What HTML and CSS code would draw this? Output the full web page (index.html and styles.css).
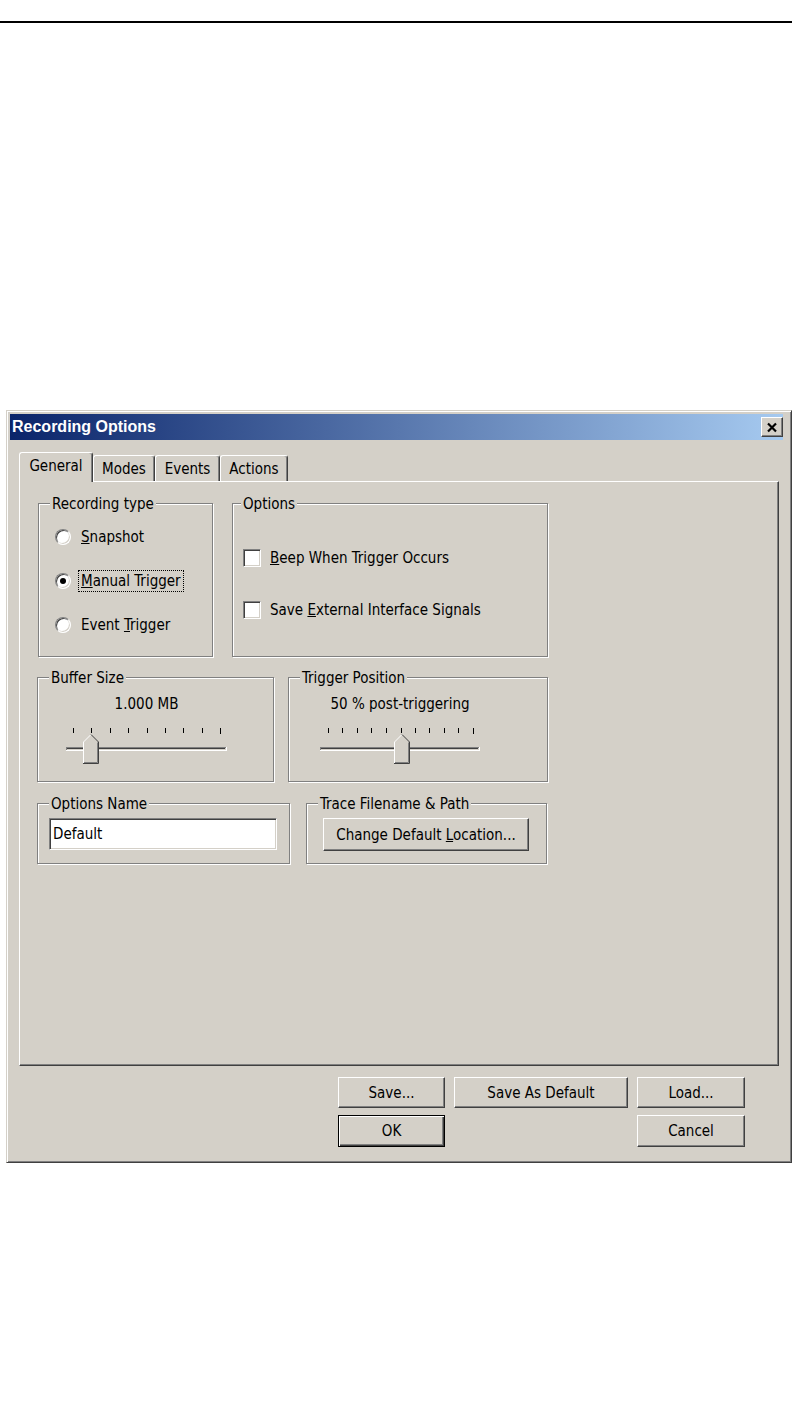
FILE: index.html
```html
<!DOCTYPE html>
<html lang="en">

<head>
    <meta charset="UTF-8">
    <title>Recording Options</title>
    <link rel="stylesheet" href="styles.css">
</head>

<body>
    <div class="rule"></div>

    <div class="dialog">
        <div class="titlebar">
            <span class="title">Recording Options</span>
            <span class="close">
                <svg width="12" height="11" viewBox="0 0 12 11">
                    <path d="M2 1.5 L10 9.5 M10 1.5 L2 9.5" stroke="#000" stroke-width="2.2" fill="none"/>
                </svg>
            </span>
        </div>

        <div class="tabs">
            <div class="tab active">General</div>
            <div class="tab tab-modes">Modes</div>
            <div class="tab tab-events">Events</div>
            <div class="tab tab-actions">Actions</div>
        </div>

        <div class="panel">
            <div class="row">
                <div class="group g-rectype">
                    <div class="legend">Recording type</div>
                    <div class="choices">
                        <div class="choice"><span class="radio"></span><span class="lbl"><u>S</u>napshot</span></div>
                        <div class="choice"><span class="radio checked"></span><span class="lbl focus"><u>M</u>anual Trigger</span></div>
                        <div class="choice"><span class="radio"></span><span class="lbl">Event <u>T</u>rigger</span></div>
                    </div>
                </div>
                <div class="group g-options">
                    <div class="legend legend-tight">Options</div>
                    <div class="checks">
                        <div class="choice"><span class="check"></span><span class="lbl"><u>B</u>eep When Trigger Occurs</span></div>
                        <div class="choice"><span class="check"></span><span class="lbl">Save <u>E</u>xternal Interface Signals</span></div>
                    </div>
                </div>
            </div>

            <div class="row row-2">
                <div class="group g-buffer">
                    <div class="legend">Buffer Size</div>
                    <div class="slider-box buffer-slider">
                        <div class="value">1.000 MB</div>
                        <svg width="161" height="37" viewBox="0 0 161 37" shape-rendering="crispEdges">
                            <g fill="#000">
                                <rect x="7" y="0" width="1" height="5"/>
                                <rect x="25" y="0" width="1" height="5"/>
                                <rect x="44" y="0" width="1" height="5"/>
                                <rect x="62" y="0" width="1" height="5"/>
                                <rect x="81" y="0" width="1" height="5"/>
                                <rect x="99" y="0" width="1" height="5"/>
                                <rect x="117" y="0" width="1" height="5"/>
                                <rect x="136" y="0" width="1" height="5"/>
                                <rect x="154" y="0" width="1" height="6"/>
                            </g>
                            <rect x="0" y="19" width="160" height="1" fill="#808080"/>
                            <rect x="1" y="20" width="158" height="1" fill="#404040"/>
                            <rect x="0" y="19" width="1" height="4" fill="#808080"/>
                            <rect x="0" y="22" width="161" height="1" fill="#fff"/>
                            <rect x="160" y="19" width="1" height="4" fill="#fff"/>
                            <polygon points="17,14 25,6 33,14 33,36 17,36" fill="#d4d0c8"/>
                            <polyline points="17.5,35 17.5,14 25,6.5" stroke="#fff" fill="none" shape-rendering="auto"/>
                            <polyline points="25,6.5 32.5,14 32.5,35.5 17,35.5" stroke="#404040" fill="none" shape-rendering="auto"/>
                            <polyline points="31.5,14.5 31.5,34.5 18,34.5" stroke="#808080" fill="none" shape-rendering="auto"/>
                        </svg>
                    </div>
                </div>
                <div class="group g-trigger">
                    <div class="legend">Trigger Position</div>
                    <div class="slider-box trigger-slider">
                        <div class="value">50 % post-triggering</div>
                        <svg width="160" height="37" viewBox="0 0 160 37" shape-rendering="crispEdges">
                            <g fill="#000">
                                <rect x="8" y="0" width="1" height="5"/>
                                <rect x="22" y="0" width="1" height="5"/>
                                <rect x="37" y="0" width="1" height="5"/>
                                <rect x="51" y="0" width="1" height="5"/>
                                <rect x="66" y="0" width="1" height="5"/>
                                <rect x="81" y="0" width="1" height="5"/>
                                <rect x="95" y="0" width="1" height="5"/>
                                <rect x="109" y="0" width="1" height="5"/>
                                <rect x="124" y="0" width="1" height="5"/>
                                <rect x="138" y="0" width="1" height="5"/>
                                <rect x="153" y="0" width="1" height="6"/>
                            </g>
                            <rect x="0" y="19" width="159" height="1" fill="#808080"/>
                            <rect x="1" y="20" width="157" height="1" fill="#404040"/>
                            <rect x="0" y="19" width="1" height="4" fill="#808080"/>
                            <rect x="0" y="22" width="160" height="1" fill="#fff"/>
                            <rect x="159" y="19" width="1" height="4" fill="#fff"/>
                            <polygon points="74,14 82,6 90,14 90,36 74,36" fill="#d4d0c8"/>
                            <polyline points="74.5,35 74.5,14 82,6.5" stroke="#fff" fill="none" shape-rendering="auto"/>
                            <polyline points="82,6.5 89.5,14 89.5,35.5 74,35.5" stroke="#404040" fill="none" shape-rendering="auto"/>
                            <polyline points="88.5,14.5 88.5,34.5 75,34.5" stroke="#808080" fill="none" shape-rendering="auto"/>
                        </svg>
                    </div>
                </div>
            </div>

            <div class="row row-3">
                <div class="group g-name">
                    <div class="legend">Options Name</div>
                    <div class="textbox">Default</div>
                </div>
                <div class="group g-trace">
                    <div class="legend">Trace Filename &amp; Path</div>
                    <button class="btn btn-location">Change Default <u>L</u>ocation...</button>
                </div>
            </div>
        </div>

        <div class="buttons">
            <button class="btn">Save...</button>
            <button class="btn">Save As Default</button>
            <button class="btn">Load...</button>
            <button class="btn btn-default">OK</button>
            <button class="btn btn-cancel">Cancel</button>
        </div>
    </div>
</body>

</html>
```

FILE: styles.css
```css
body {
    margin: 0;
    background: #fff;
    font-family: "DejaVu Sans Condensed", "Liberation Sans", sans-serif;
    font-size: 15px;
    color: #000;
}

.rule {
    margin-top: 21px;
    height: 2px;
    background: #000;
}

.dialog {
    box-sizing: border-box;
    width: 786px;
    height: 753px;
    margin: 387px 0 0 6px;
    padding: 3px 8px 3px 3px;
    background: #d4d0c8;
    border: 1px solid;
    border-color: #d4d0c8 #404040 #404040 #d4d0c8;
    box-shadow: inset 1px 1px 0 #fff, inset -1px -1px 0 #808080;
}

.titlebar {
    display: flex;
    align-items: center;
    justify-content: space-between;
    height: 26px;
    padding: 0 0 0 2px;
    background: linear-gradient(to right, #0a246a, #a6caf0);
}

.title {
    color: #fff;
    font-family: "Liberation Sans", sans-serif;
    font-weight: bold;
    font-size: 16px;
}

.close {
    box-sizing: border-box;
    display: flex;
    align-items: center;
    justify-content: center;
    width: 22px;
    height: 20px;
    background: #d4d0c8;
    border: 1px solid;
    border-color: #fff #404040 #404040 #fff;
    box-shadow: inset -1px -1px 0 #808080;
}

/* tabs */

.tabs {
    display: flex;
    align-items: flex-end;
    height: 29px;
    margin: 12px 0 0 9px;
}

.tab {
    box-sizing: border-box;
    display: flex;
    align-items: center;
    justify-content: center;
    height: 26px;
    padding-top: 1px;
    border: 1px solid;
    border-bottom: 0;
    border-color: #fff #404040 #404040 #fff;
    border-radius: 3px 3px 0 0;
    box-shadow: inset -1px 0 0 #808080;
}

.tab.active {
    position: relative;
    z-index: 1;
    width: 74px;
    height: 30px;
    margin-bottom: -1px;
    padding: 0 0 3px;
    background: #d4d0c8;
}

.tab-modes { width: 62px; }
.tab-events { width: 65px; }
.tab-actions { width: 68px; }

.panel {
    box-sizing: border-box;
    width: 760px;
    height: 585px;
    margin-left: 9px;
    padding: 21px 0 0 17px;
    border: 1px solid;
    border-color: #fff #404040 #404040 #fff;
    box-shadow: inset -1px -1px 0 #808080;
}

.row {
    display: flex;
    align-items: flex-start;
}

.row-2 { margin-top: 20px; }
.row-3 { margin-top: 21px; }

/* group boxes */

.group {
    box-sizing: border-box;
    border: 1px solid #808080;
    box-shadow: 1px 1px 0 #fff, inset 1px 1px 0 #fff;
}

.legend {
    display: table;
    margin: -8px 0 0 11px;
    padding: 0 2px;
    line-height: 16px;
    background: #d4d0c8;
}

.legend-tight { margin-left: 8px; }

.g-rectype { width: 175px; height: 154px; margin-left: 1px; }
.g-options { width: 316px; height: 154px; margin-left: 19px; }
.g-buffer { width: 237px; height: 105px; }
.g-trigger { width: 260px; height: 105px; margin-left: 14px; }
.g-name { width: 253px; height: 61px; }
.g-trace { width: 241px; height: 61px; margin-left: 16px; }

/* radios and checks */

.choices {
    display: flex;
    flex-direction: column;
    gap: 20px;
    margin-top: 13px;
    padding-left: 16px;
}

.checks {
    display: flex;
    flex-direction: column;
    gap: 30px;
    margin-top: 35px;
    padding-left: 10px;
}

.choice {
    display: flex;
    align-items: center;
    height: 24px;
}

.checks .choice { height: 22px; }

.lbl {
    margin-left: 7px;
    padding: 0 2px;
    line-height: 20px;
    border: 1px dotted transparent;
}

.checks .lbl { margin-left: 6px; }

.lbl.focus { border-color: #000; }

.radio {
    position: relative;
    box-sizing: border-box;
    width: 16px;
    height: 16px;
    border-radius: 50%;
    background: #fff;
    border: 1px solid;
    border-color: #808080 #fff #fff #808080;
    box-shadow: inset 1px 1px 0 #404040, inset -1px -1px 0 #d4d0c8;
}

.radio.checked::after {
    content: "";
    position: absolute;
    left: 4px;
    top: 4px;
    width: 6px;
    height: 6px;
    border-radius: 50%;
    background: #000;
}

.check {
    box-sizing: border-box;
    width: 18px;
    height: 18px;
    background: #fff;
    border: 1px solid;
    border-color: #808080 #fff #fff #808080;
    box-shadow: inset 1px 1px 0 #404040, inset -1px -1px 0 #d4d0c8;
}

/* sliders */

.slider-box {
    margin-top: 10px;
}

.slider-box svg {
    display: block;
    margin-top: 16px;
}

.buffer-slider { width: 161px; margin-left: 28px; }
.trigger-slider { width: 160px; margin-left: 31px; }

.value {
    text-align: center;
    line-height: 16px;
}

/* text box */

.textbox {
    box-sizing: border-box;
    width: 228px;
    height: 32px;
    margin: 6px 0 0 11px;
    padding-left: 3px;
    line-height: 30px;
    background: #fff;
    border: 1px solid;
    border-color: #808080 #fff #fff #808080;
    box-shadow: inset 1px 1px 0 #404040, inset -1px -1px 0 #d4d0c8;
}

/* buttons */

.btn {
    box-sizing: border-box;
    margin: 0;
    padding: 0;
    font: inherit;
    color: #000;
    background: #d4d0c8;
    border: 1px solid;
    border-color: #fff #404040 #404040 #fff;
    box-shadow: inset -1px -1px 0 #808080;
}

.btn-location {
    display: block;
    width: 206px;
    height: 33px;
    margin: 6px 0 0 16px;
}

.buttons {
    display: grid;
    grid-template-columns: 107px 174px 108px;
    grid-template-rows: 31px 32px;
    column-gap: 9px;
    row-gap: 7px;
    margin: 11px 0 0 328px;
}

.btn-default {
    border-color: #000;
    box-shadow: inset 1px 1px 0 #fff, inset -1px -1px 0 #404040, inset -2px -2px 0 #808080;
}

.btn-cancel {
    grid-column: 3;
}
```
